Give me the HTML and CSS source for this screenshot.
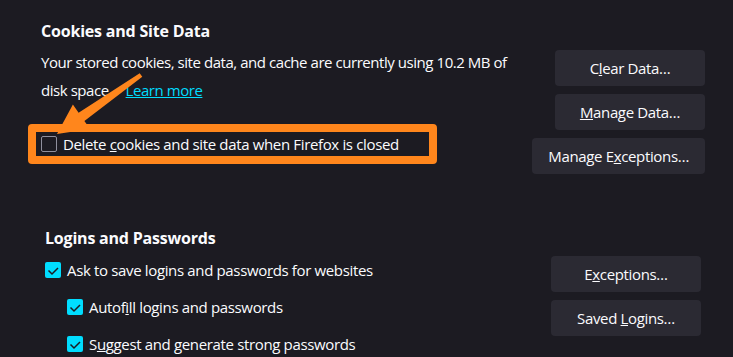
FILE: index.html
```html
<!DOCTYPE html>
<html lang="en">
<head>
    <meta charset="UTF-8">
    <meta name="viewport" content="width=device-width, initial-scale=1.0">
    <title>Privacy &amp; Security</title>
    <link rel="stylesheet" href="styles.css">
</head>
<body>
    <section class="group cookies">
        <div class="main">
            <h2>Cookies and Site Data</h2>
            <p class="desc">Your stored cookies, site data, and cache are currently using 10.2 MB of disk space. <a href="#">Learn more</a></p>
            <div class="highlight">
                <label class="check">
                    <span class="box"></span>
                    <span>Delete <u>c</u>ookies and site data when Firefox is closed</span>
                </label>
            </div>
        </div>
        <div class="actions">
            <button>C<u>l</u>ear Data…</button>
            <button><u>M</u>anage Data…</button>
            <button>Manage E<u>x</u>ceptions…</button>
        </div>
    </section>

    <section class="group logins">
        <div class="main">
            <h2>Logins and Passwords</h2>
            <div class="rows">
                <label class="check">
                    <span class="box on"><svg viewBox="0 0 16 16"><path d="M3.5 8.5L7 12l6-6"/></svg></span>
                    <span>Ask to save logins and passwo<u>r</u>ds for websites</span>
                </label>
                <label class="check sub">
                    <span class="box on"><svg viewBox="0 0 16 16"><path d="M3.5 8.5L7 12l6-6"/></svg></span>
                    <span>Autof<u>i</u>ll logins and passwords</span>
                </label>
                <label class="check sub">
                    <span class="box on"><svg viewBox="0 0 16 16"><path d="M3.5 8.5L7 12l6-6"/></svg></span>
                    <span>S<u>u</u>ggest and generate strong passwords</span>
                </label>
            </div>
        </div>
        <div class="actions">
            <button>E<u>x</u>ceptions…</button>
            <button>Saved <u>L</u>ogins…</button>
        </div>
    </section>

    <!-- annotation arrow -->
    <svg class="arrow" viewBox="0 0 733 357" xmlns="http://www.w3.org/2000/svg">
        <polygon points="57,134 72.9,104.6 78.6,112.7 139.7,73.2 142.3,76.8 84.4,120.9 90.1,129" fill="#ff861c"/>
    </svg>
</body>
</html>
```

FILE: styles.css
```css
body {
    margin: 0;
    width: 733px;
    height: 357px;
    overflow: hidden;
    position: relative;
    background-color: #1c1b22;
    color: #fbfbfe;
    font-family: "Open Sans", "Noto Sans", sans-serif;
    font-size: 15px;
    letter-spacing: -0.35px;
}

.group {
    display: flex;
    justify-content: space-between;
}

.cookies {
    padding: 18px 28px 0 41px;
}

.logins {
    margin-top: 51px;
    padding: 0 32px 0 45px;
}

h2 {
    margin: 0;
    font-size: 16px;
    font-weight: 700;
    line-height: 26px;
    letter-spacing: -0.2px;
}

.desc {
    width: 482px;
    margin: 4px 0 0;
    line-height: 28px;
    letter-spacing: -0.45px;
}

.desc a {
    color: #00ddff;
    margin-left: 10px;
}

.highlight {
    margin: 20px 0 0 -13px;
    width: 388px;
    border: 8px solid #ff861c;
    border-radius: 4px;
    padding: 0 0 0 5px;
}

.check {
    display: flex;
    align-items: center;
    gap: 6px;
    height: 24px;
}

.box {
    width: 16px;
    height: 16px;
    box-sizing: border-box;
    border: 1px solid #8f8f9d;
    border-radius: 2px;
    flex-shrink: 0;
}

.box.on {
    border: none;
    background-color: #00ddff;
}

.box svg {
    display: block;
    width: 16px;
    height: 16px;
    fill: none;
    stroke: #1c1b22;
    stroke-width: 1.5;
}

.rows {
    margin-top: 5px;
    display: flex;
    flex-direction: column;
    gap: 9px;
}

.rows .check {
    height: 28px;
}

.check.sub {
    margin-left: 22px;
}

.actions {
    display: flex;
    flex-direction: column;
    align-items: flex-end;
    gap: 8px;
}

.cookies .actions {
    padding-top: 32px;
}

.logins .actions {
    padding-top: 31px;
}

button {
    height: 36px;
    min-width: 150px;
    padding: 0 16px;
    border: none;
    border-radius: 4px;
    background-color: #2b2a33;
    color: #fbfbfe;
    font-family: inherit;
    font-size: 15px;
    letter-spacing: inherit;
}

.arrow {
    position: absolute;
    left: 0;
    top: 0;
    width: 733px;
    height: 357px;
    pointer-events: none;
}
```
